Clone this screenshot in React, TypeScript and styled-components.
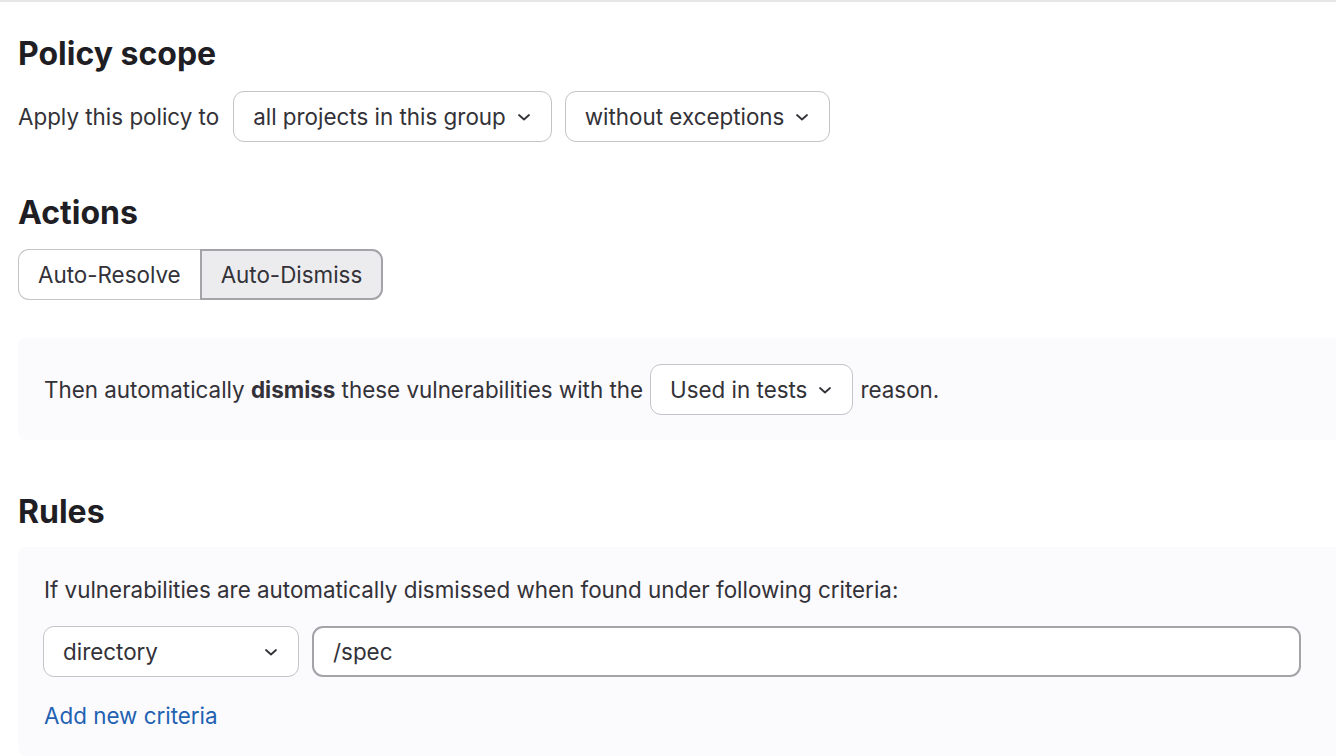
import React, { useState } from 'react';
import styled, { createGlobalStyle } from 'styled-components';

const GlobalStyle = createGlobalStyle`
    body {
        margin: 0;
        background: #ffffff;
        font-family: Inter, "Noto Sans", sans-serif;
        color: #333238;
        overflow: hidden;
    }
`;

const Page = styled.div`
    border-top: 2px solid #e6e6e9;
    padding-left: 18px;
    display: flex;
    flex-direction: column;
`;

const Heading = styled.h2<{ $top: number }>`
    margin: ${(p) => p.$top}px 0 0;
    font-size: 32px;
    font-weight: 700;
    line-height: 40px;
    color: #1f1e24;
`;

const Row = styled.div<{ $top: number }>`
    display: flex;
    align-items: center;
    gap: 13px;
    margin-top: ${(p) => p.$top}px;
    font-size: 22.4px;
`;

const Label = styled.span`
    margin-right: 1px;
`;

const Dropdown = styled.button<{ $width?: number }>`
    height: 51px;
    ${(p) => (p.$width ? `width: ${p.$width}px;` : '')}
    display: flex;
    align-items: center;
    justify-content: space-between;
    gap: 9px;
    padding: 0 18px 0 19px;
    background: #ffffff;
    border: 1px solid #c4c3c8;
    border-radius: 11px;
    font-family: inherit;
    font-size: 22.4px;
    color: #333238;
    cursor: pointer;
`;

const Segmented = styled.div`
    display: flex;
    margin-top: 16px;
    width: max-content;
`;

const Segment = styled.button<{ $active?: boolean }>`
    height: 51px;
    padding: 0 19px;
    font-family: inherit;
    font-size: 22.4px;
    color: #333238;
    cursor: pointer;
    background: ${(p) => (p.$active ? '#ececef' : '#ffffff')};
    border: ${(p) => (p.$active ? '2px solid #a4a3a8' : '1px solid #c4c3c8')};
    &:first-child {
        border-radius: 11px 0 0 11px;
        border-right: none;
    }
    &:last-child {
        border-radius: 0 11px 11px 0;
    }
`;

const Panel = styled.div<{ $top: number }>`
    margin-top: ${(p) => p.$top}px;
    margin-right: -20px;
    background: #fbfafd;
    border-radius: 8px;
    padding: 26px 26px 22px;
    display: flex;
    flex-direction: column;
    font-size: 22.4px;
    line-height: 36px;
`;

const Sentence = styled.div`
    display: flex;
    align-items: center;
    gap: 7px;
    margin-bottom: 3px;
`;

const RulesText = styled.span`
    margin-top: -1px;
`;

const Criteria = styled.div`
    display: flex;
    gap: 13px;
    margin-top: 18px;
    margin-left: -1px;
    padding-right: 29px;
`;

const TextInput = styled.input`
    flex: 1;
    height: 51px;
    box-sizing: border-box;
    padding: 0 19px;
    border: 2px solid #a4a3a8;
    border-radius: 11px;
    font-family: inherit;
    font-size: 22.4px;
    color: #333238;
    background: #ffffff;
    outline: none;
`;

const LinkText = styled.a`
    margin-top: 21px;
    color: #1f62b2;
    text-decoration: none;
    cursor: pointer;
`;

const Chevron = () => (
    <svg width="18" height="18" viewBox="0 0 18 18" fill="none">
        <path d="M4 7l5 4.5L14 7" stroke="#333238" strokeWidth="1.8" strokeLinecap="round" strokeLinejoin="round" />
    </svg>
);

export default function App() {
    const [action, setAction] = useState<'resolve' | 'dismiss'>('dismiss');
    const [path, setPath] = useState('/spec');

    return (
        <Page>
            <GlobalStyle />
            <Heading $top={32}>Policy scope</Heading>
            <Row $top={17}>
                <Label>Apply this policy to</Label>
                <Dropdown>
                    all projects in this group
                    <Chevron />
                </Dropdown>
                <Dropdown>
                    without exceptions
                    <Chevron />
                </Dropdown>
            </Row>

            <Heading $top={51}>Actions</Heading>
            <Segmented>
                <Segment $active={action === 'resolve'} onClick={() => setAction('resolve')}>
                    Auto-Resolve
                </Segment>
                <Segment $active={action === 'dismiss'} onClick={() => setAction('dismiss')}>
                    Auto-Dismiss
                </Segment>
            </Segmented>

            <Panel $top={38}>
                <Sentence>
                    <span>
                        Then automatically <b>dismiss</b> these vulnerabilities with the
                    </span>
                    <Dropdown>
                        Used in tests
                        <Chevron />
                    </Dropdown>
                    <span>reason.</span>
                </Sentence>
            </Panel>

            <Heading $top={52}>Rules</Heading>
            <Panel $top={15}>
                <RulesText>If vulnerabilities are automatically dismissed when found under following criteria:</RulesText>
                <Criteria>
                    <Dropdown $width={256}>
                        directory
                        <Chevron />
                    </Dropdown>
                    <TextInput value={path} onChange={(e) => setPath(e.target.value)} />
                </Criteria>
                <LinkText>Add new criteria</LinkText>
            </Panel>
        </Page>
    );
}
